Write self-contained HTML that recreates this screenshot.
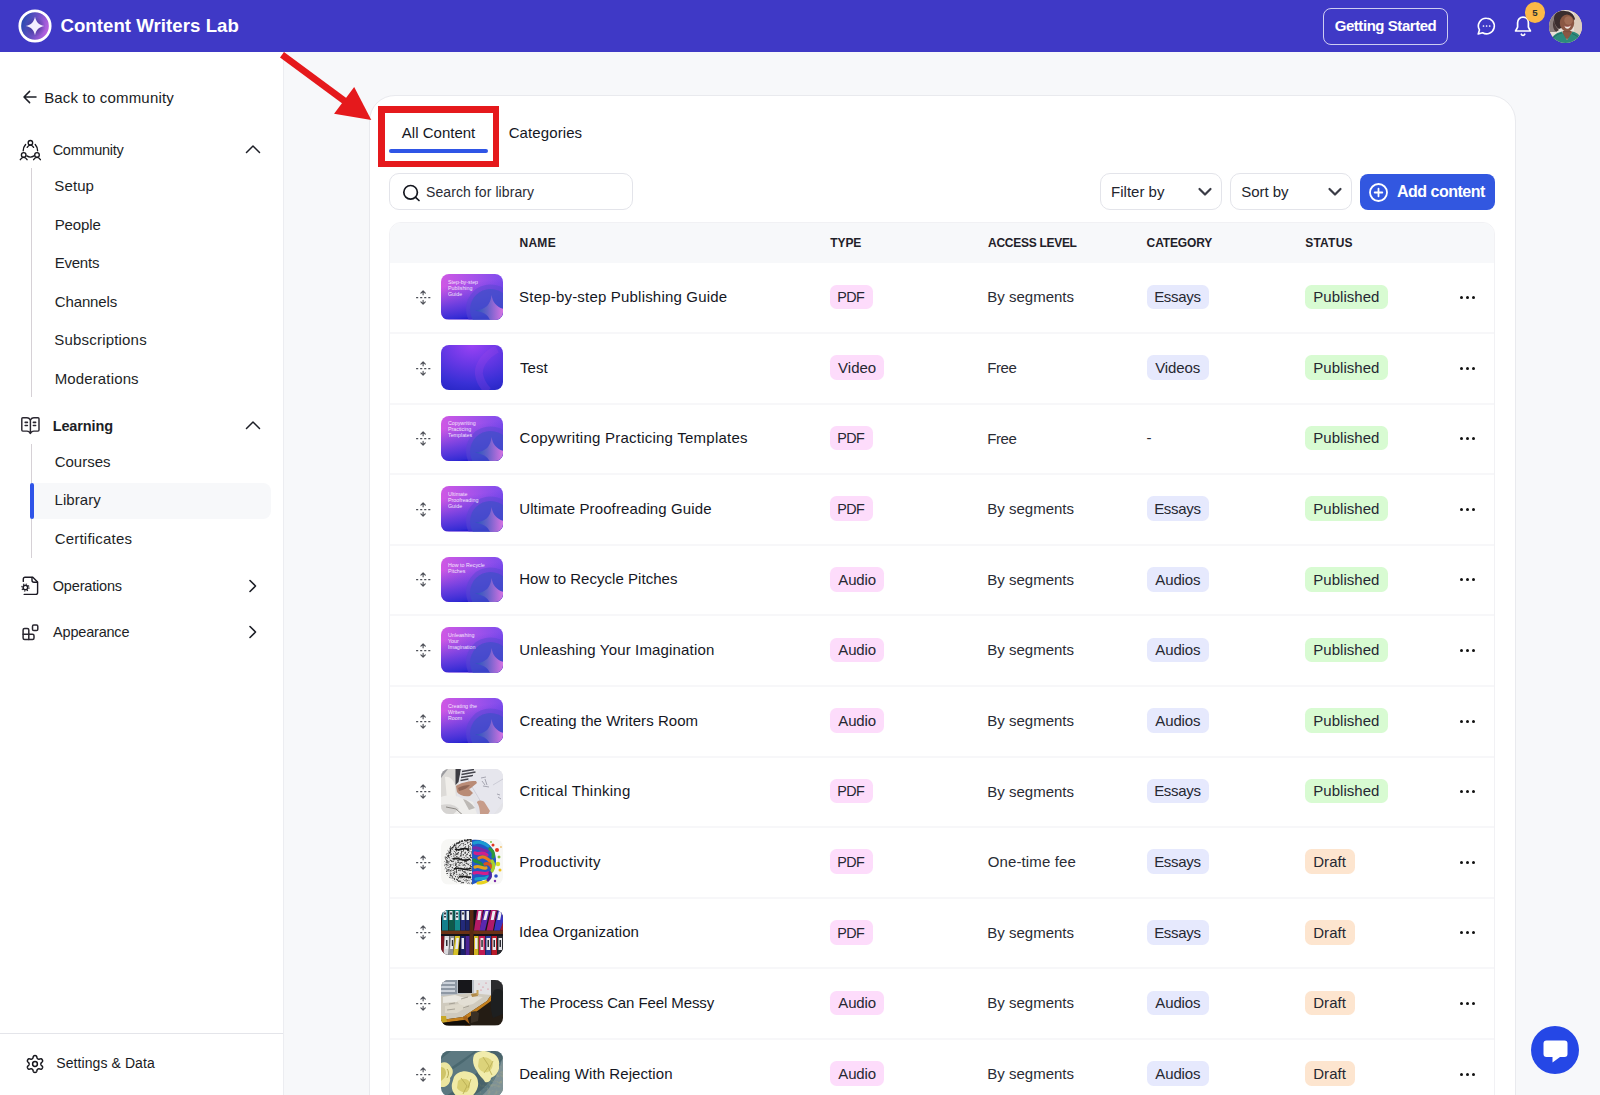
<!DOCTYPE html>
<html lang="en">
<head>
<meta charset="utf-8">
<title>Content Writers Lab - Library</title>
<style>
*{box-sizing:border-box;margin:0;padding:0}
html,body{width:1600px;height:1095px;overflow:hidden;background:#f7f8fa;font-family:"Liberation Sans",sans-serif;color:#191b23}
body{position:relative}
.abs{position:absolute}
.t{position:absolute;white-space:nowrap;line-height:20px;height:20px;margin-top:-10px}
/* header */
#hdr{position:absolute;left:0;top:0;width:1600px;height:52px;background:#3f39c6}
.brand{left:61px;top:26.200px;color:#fff;font-weight:700;font-size:18.600px}
#gs{position:absolute;left:1323px;top:8px;width:124.500px;height:36.500px;border:1px solid rgba(255,255,255,.75);border-radius:8px;color:#fff;font-weight:700;font-size:15px;line-height:34px;text-align:center}
#badge{position:absolute;left:1524.500px;top:2.400px;width:20.600px;height:20.600px;border-radius:50%;background:#fcb947;color:#2b3230;font-size:9.600px;font-weight:700;text-align:center;line-height:22.600px}
#avatar{position:absolute;left:1549px;top:9.700px;width:33px;height:33px;border-radius:50%;overflow:hidden;background:#8a6a5a}
/* sidebar */
#side{position:absolute;left:0;top:52px;width:284px;height:1043px;background:#fff;border-right:1px solid #ecedf1}
.nav{font-size:14.5px;color:#1d1f27}
.sub{font-size:15px;color:#1d1f27;left:55px}
.vline{position:absolute;left:31px;width:1px;background:#d6d1d6}
#active{position:absolute;left:31px;top:483px;width:240px;height:36px;background:#f7f8fa;border-radius:0 8px 8px 0}
#activebar{position:absolute;left:30px;top:483px;width:4px;height:36px;background:#2f54e8;border-radius:2px}
#sdiv{position:absolute;left:0;top:1033px;width:283px;height:1px;background:#e4e5ea}
/* card */
#card{position:absolute;left:369px;top:95px;width:1147px;height:1040px;background:#fff;border:1px solid #e9eaee;border-radius:26px}
.box{background:#fff;border:1px solid #e3e4ea;border-radius:10px}
.chev{fill:none;stroke:#3a3c46;stroke-width:2.200;stroke-linecap:round;stroke-linejoin:round}
.hd{font-size:12px;font-weight:700;color:#1f2129;letter-spacing:.2px}
.rdiv{position:absolute;left:390px;width:1104px;height:2px;background:#f7f7f9}
.nm{font-size:15px;color:#15171f;letter-spacing:.2px}
.ac{font-size:15px;color:#2a2c35;letter-spacing:.2px}
.bx{position:absolute;height:24.700px;border-radius:6.500px}
.bt{font-size:15px;color:#262832}
.pk{background:#fddcfb}
.bl{background:#e6e9fd}
.gr{background:#d8fbd2}
.or{background:#fde5cf}
.dots{position:absolute;width:16px;height:3px}
.dots i{position:absolute;top:0;width:3px;height:3px;border-radius:50%;background:#111}
.dots i:nth-child(1){left:0}.dots i:nth-child(2){left:6px}.dots i:nth-child(3){left:12px}
.th{position:absolute;left:441px;width:62.300px;height:45.400px;border-radius:8px;overflow:hidden}
.th svg{display:block}
.th b{position:absolute;left:7px;top:5.800px;font-size:5.300px;line-height:5.900px;font-weight:400;color:rgba(255,255,255,.88)}
.th b span{display:block}
</style>
</head>
<body>
<div id="hdr">
  <svg class="abs" style="left:16.500px;top:8.250px" width="36" height="36" viewBox="0 0 36 36">
    <defs><linearGradient id="lg" x1="0" y1="0.350" x2="1" y2="0.650"><stop offset="0" stop-color="#1f49ae"/><stop offset=".5" stop-color="#6b50c4"/><stop offset="1" stop-color="#c765e6"/></linearGradient>
    <radialGradient id="lgs" cx=".5" cy=".5" r=".5"><stop offset="0" stop-color="#1c1a6a" stop-opacity=".55"/><stop offset="1" stop-color="#1c1a6a" stop-opacity="0"/></radialGradient></defs>
    <circle cx="18" cy="18" r="15.200" fill="url(#lg)" stroke="#fff" stroke-width="2.700"/>
    <circle cx="18.500" cy="19" r="10" fill="url(#lgs)"/>
    <path d="M18 8.800C19.300 14.400 21.600 16.700 27.200 18 21.600 19.300 19.300 21.600 18 27.200 16.700 21.600 14.400 19.300 8.800 18 14.400 16.700 16.700 14.400 18 8.800Z" fill="#f3efff"/>
  </svg>
  <div class="t brand" style="letter-spacing:0.063px;margin-left:-0.61px">Content Writers Lab</div>
  <div id="gs"></div>
  <div class="t" style="left:1334px;top:26.200px;color:#fff;font-weight:700;font-size:15px;letter-spacing:-0.45px;margin-left:0.72px">Getting Started</div>
  <svg class="abs" style="left:1475px;top:15px" width="22" height="22" viewBox="0 0 22 22" fill="none" stroke="#fff" stroke-width="1.6" stroke-linecap="round" stroke-linejoin="round">
    <path d="M11.5 3.2a7.8 7.8 0 1 1-3.9 14.55L3.2 19l1.25-4.1A7.8 7.8 0 0 1 11.5 3.2Z"/>
    <circle cx="8.500" cy="11" r=".850" fill="#fff" stroke="none"/><circle cx="11.600" cy="11" r=".850" fill="#fff" stroke="none"/><circle cx="14.700" cy="11" r=".850" fill="#fff" stroke="none"/>
  </svg>
  <svg class="abs" style="left:1512px;top:14px" width="22" height="24" viewBox="0 0 22 24" fill="none" stroke="#fff" stroke-width="1.7" stroke-linecap="round" stroke-linejoin="round">
    <path d="M11 3.2c-3.3 0-5.4 2.5-5.4 5.6v4.3L3.6 17h14.8l-2-3.9V8.8c0-3.1-2.1-5.6-5.4-5.6Z"/>
    <path d="M9.3 20.2a1.8 1.8 0 0 0 3.4 0"/>
  </svg>
  <div id="badge">5</div>
  <div id="avatar">
    <svg width="33" height="33" viewBox="0 0 33 33">
      <rect width="33" height="33" fill="#e9e0d8"/>
      <rect x="25" y="0" width="8" height="33" fill="#dccdbd"/>
      <path d="M0 2h12v14l-6 6H0Z" fill="#8d807e"/>
      <path d="M5 9C5 3 10 0 16 1c5 0 9 3 10 8l-3 4-13 6C7 17 5 13 5 9Z" fill="#3a2d2e"/>
      <path d="M5 10c1 5 2 8 5 10l-3 2c-3-3-4-8-2-12Z" fill="#4a3b3a"/>
      <ellipse cx="18" cy="13" rx="7.200" ry="8.600" fill="#8a5743"/>
      <ellipse cx="19.500" cy="10.500" rx="4.200" ry="4.200" fill="#a16c55"/>
      <path d="M14 21h8.500v7H14Z" fill="#7e4f3e"/>
      <path d="M15.500 15.800c2 .9 4.500.8 6.300-.6-.4 2.300-1.700 3.500-3.300 3.500s-2.700-1.100-3-2.900Z" fill="#f3e9e2"/>
      <path d="M15.500 15.800c2 .9 4.500.8 6.300-.6" stroke="#a24a4a" stroke-width=".7" fill="none"/>
      <path d="M2 33c0-6 4-10 11-11.500l5 8.500 5.500-8.500c5 1 8 4 9.500 9V33Z" fill="#2d8b7c"/>
      <path d="M13 21.500l5 8.500 5.500-8.500c-3.500 1-7 1-10.500 0Z" fill="#8a5743"/>
      <path d="M4 28c3-3 6-4.500 9-5M23 23.500c3 1 6 3 8 6" stroke="#226b60" stroke-width="1" fill="none"/>
    </svg>
  </div>
</div>

<div id="side">
</div>
<!-- sidebar contents positioned on body for exact coordinates -->
<svg class="abs" style="left:22px;top:89px" width="16" height="16" viewBox="0 0 16 16" fill="none" stroke="#1d1f27" stroke-width="1.5" stroke-linecap="round" stroke-linejoin="round"><path d="M14 8H2.2M7.6 2.4 2 8l5.6 5.6"/></svg>
<div class="t" style="left:45px;top:97.6px;font-size:15px;letter-spacing:.15px;letter-spacing:0.181px;margin-left:-0.85px">Back to community</div>

<svg class="abs" style="left:18px;top:138px" width="24" height="24" viewBox="0 0 24 24" fill="none" stroke="#16161c" stroke-width="1.350" stroke-linecap="round" stroke-linejoin="round">
  <circle cx="12.400" cy="4.700" r="2.250"/><path d="M9.200 9.300c.9-1.600 2-2.200 3.200-2.200s2.300.6 3.200 2.200"/>
  <circle cx="5.700" cy="16.900" r="2.300"/><path d="M2.300 21.700c1-1.700 2.100-2.300 3.400-2.300s2.400.6 3.400 2.300"/>
  <circle cx="19" cy="16.900" r="2.300"/><path d="M15.600 21.700c1-1.700 2.100-2.300 3.400-2.300s2.400.6 3.400 2.300"/>
  <path d="M7.600 6.500Q5.200 9.200 5.200 12.700M17.200 6.500q2.400 2.700 2.400 6.200M8.900 17.900q3.500 2.400 7 0"/>
</svg>
<div class="t nav" style="left:53px;top:150px;letter-spacing:-0.269px;margin-left:-0.35px">Community</div>
<svg class="abs" style="left:245px;top:143px" width="16" height="12" viewBox="0 0 16 12" fill="none" stroke="#1d1f27" stroke-width="1.5" stroke-linecap="round" stroke-linejoin="round"><path d="M1.500 9.500 8 3l6.500 6.500"/></svg>
<div class="vline" style="top:168px;height:229px"></div>
<div class="t sub" style="top:186.4px;letter-spacing:0.1px;margin-left:-0.67px">Setup</div>
<div class="t sub" style="top:224.8px;letter-spacing:-0.115px;margin-left:-0.37px">People</div>
<div class="t sub" style="top:263.2px;letter-spacing:-0.208px;margin-left:-0.37px">Events</div>
<div class="t sub" style="top:301.5px;letter-spacing:-0.094px;margin-left:-0.37px">Channels</div>
<div class="t sub" style="top:339.9px;letter-spacing:0.189px;margin-left:-0.67px">Subscriptions</div>
<div class="t sub" style="top:378.5px;letter-spacing:0.143px;margin-left:-0.37px">Moderations</div>

<svg class="abs" style="left:18px;top:413px" width="24" height="24" viewBox="0 0 24 24" fill="none" stroke="#2a2730" stroke-width="1.450" stroke-linecap="round" stroke-linejoin="round">
  <path d="M12.400 6.900C11.400 5.400 10.200 4.800 9 4.800H4.800a1 1 0 0 0-1 1V17.100a1 1 0 0 0 1 1H9c1.200 0 2.400.5 3.400 2.100"/>
  <path d="M12.400 6.900c1-1.500 2.200-2.100 3.400-2.100H20a1 1 0 0 1 1 1V17.100a1 1 0 0 1-1 1h-4.200c-1.200 0-2.400.5-3.400 2.100"/>
  <path d="M12.400 6.900V20.600"/>
  <path d="M7.200 9.400h2.200M7.200 12.500h2.200M15.400 9.400h2.200M15.400 12.500h2.200" stroke-width="1.600"/>
</svg>
<div class="t nav" style="left:53px;top:425.7px;font-weight:700;letter-spacing:-0.119px;margin-left:-0.32px">Learning</div>
<svg class="abs" style="left:245px;top:419px" width="16" height="12" viewBox="0 0 16 12" fill="none" stroke="#1d1f27" stroke-width="1.500" stroke-linecap="round" stroke-linejoin="round"><path d="M1.500 9.500 8 3l6.500 6.500"/></svg>
<div class="vline" style="top:444px;height:114px"></div>
<div id="active"></div><div id="activebar"></div>
<div class="t sub" style="top:462.1px;letter-spacing:0.005px;margin-left:-0.37px">Courses</div>
<div class="t sub" style="top:500.4px;letter-spacing:0.074px;margin-left:-0.47px">Library</div>
<div class="t sub" style="top:538.8px;letter-spacing:0.219px;margin-left:-0.37px">Certificates</div>

<svg class="abs" style="left:18px;top:574px" width="24" height="24" viewBox="0 0 24 24" fill="none" stroke="#1c1a24" stroke-width="1.400" stroke-linecap="round" stroke-linejoin="round">
  <path d="M5.300 7.400V4.900a1.700 1.700 0 0 1 1.700-1.700h7.800L19.600 8v10.500a1.900 1.900 0 0 1-1.900 1.900H6.200"/>
  <path d="M14 3.400v2.900a2 2 0 0 0 2 2h3.400"/>
  <circle cx="7.400" cy="13.500" r="2.300" stroke-width="1.500"/>
  <circle cx="7.400" cy="13.500" r="3.600" stroke-width="1.100" stroke-dasharray="1.250 1.577" stroke-linecap="butt"/>
</svg>
<div class="t nav" style="left:53px;top:585.7px;letter-spacing:-0.177px;margin-left:-0.25px">Operations</div>
<svg class="abs" style="left:247px;top:578px" width="12" height="16" viewBox="0 0 12 16" fill="none" stroke="#1d1f27" stroke-width="1.600" stroke-linecap="round" stroke-linejoin="round"><path d="M3 2.500 8.500 8 3 13.500"/></svg>

<svg class="abs" style="left:18px;top:620px" width="24" height="24" viewBox="0 0 24 24" fill="none" stroke="#2a2730" stroke-width="1.500" stroke-linecap="round" stroke-linejoin="round">
  <path d="M5.100 14.300V9.900a1.500 1.500 0 0 1 1.500-1.500h2.700a1.500 1.500 0 0 1 1.500 1.500v4.400h3.700a1.500 1.500 0 0 1 1.500 1.500v2.300a1.500 1.500 0 0 1-1.500 1.500H6.600a1.500 1.500 0 0 1-1.500-1.500Z"/>
  <path d="M5.100 14.300h5.700v5.300"/>
  <rect x="14.500" y="5.100" width="5.300" height="5.500" rx="1.300"/>
</svg>
<div class="t nav" style="left:53px;top:632.3px;letter-spacing:-0.203px;margin-left:0.12px">Appearance</div>
<svg class="abs" style="left:247px;top:624px" width="12" height="16" viewBox="0 0 12 16" fill="none" stroke="#1d1f27" stroke-width="1.600" stroke-linecap="round" stroke-linejoin="round"><path d="M3 2.500 8.500 8 3 13.500"/></svg>

<div id="sdiv"></div>
<svg class="abs" style="left:22.800px;top:1051.900px" width="24" height="24" viewBox="0 0 24 24" fill="none" stroke="#16161c" stroke-width="1.500" stroke-linejoin="round">
  <circle cx="12" cy="12" r="2.400"/>
  <path d="M17.90 12.00 17.90 11.79 17.92 11.59 17.95 11.37 18.02 11.15 18.15 10.91 18.39 10.64 18.72 10.32 19.09 9.97 19.39 9.60 19.57 9.25 19.62 8.92 19.60 8.62 19.52 8.33 19.41 8.06 19.27 7.80 19.12 7.55 18.94 7.32 18.73 7.11 18.48 6.94 18.17 6.83 17.77 6.80 17.30 6.88 16.81 7.02 16.37 7.15 16.02 7.21 15.74 7.21 15.52 7.16 15.32 7.08 15.13 6.99 14.95 6.89 14.77 6.78 14.60 6.67 14.43 6.53 14.28 6.36 14.14 6.13 14.02 5.79 13.91 5.34 13.78 4.84 13.62 4.40 13.40 4.07 13.14 3.86 12.87 3.73 12.58 3.65 12.29 3.61 12.00 3.60 11.71 3.61 11.42 3.65 11.13 3.73 10.86 3.86 10.60 4.07 10.38 4.40 10.22 4.84 10.09 5.34 9.98 5.79 9.86 6.13 9.72 6.36 9.57 6.53 9.40 6.67 9.23 6.78 9.05 6.89 8.87 6.99 8.68 7.08 8.48 7.16 8.26 7.21 7.98 7.21 7.63 7.15 7.19 7.02 6.70 6.88 6.23 6.80 5.83 6.83 5.52 6.94 5.27 7.11 5.06 7.32 4.88 7.55 4.73 7.80 4.59 8.06 4.48 8.33 4.40 8.62 4.38 8.92 4.43 9.25 4.61 9.60 4.91 9.97 5.28 10.32 5.61 10.64 5.85 10.91 5.98 11.15 6.05 11.37 6.08 11.59 6.10 11.79 6.10 12.00 6.10 12.21 6.08 12.41 6.05 12.63 5.98 12.85 5.85 13.09 5.61 13.36 5.28 13.68 4.91 14.03 4.61 14.40 4.43 14.75 4.38 15.08 4.40 15.38 4.48 15.67 4.59 15.94 4.73 16.20 4.88 16.45 5.06 16.68 5.27 16.89 5.52 17.06 5.83 17.17 6.23 17.20 6.70 17.12 7.19 16.98 7.63 16.85 7.98 16.79 8.26 16.79 8.48 16.84 8.68 16.92 8.87 17.01 9.05 17.11 9.23 17.22 9.40 17.33 9.57 17.47 9.72 17.64 9.86 17.87 9.98 18.21 10.09 18.66 10.22 19.16 10.38 19.60 10.60 19.93 10.86 20.14 11.13 20.27 11.42 20.35 11.71 20.39 12.00 20.40 12.29 20.39 12.58 20.35 12.87 20.27 13.14 20.14 13.40 19.93 13.62 19.60 13.78 19.16 13.91 18.66 14.02 18.21 14.14 17.87 14.28 17.64 14.43 17.47 14.60 17.33 14.77 17.22 14.95 17.11 15.13 17.01 15.32 16.92 15.52 16.84 15.74 16.79 16.02 16.79 16.37 16.85 16.81 16.98 17.30 17.12 17.77 17.20 18.17 17.17 18.48 17.06 18.73 16.89 18.94 16.68 19.12 16.45 19.27 16.20 19.41 15.94 19.52 15.67 19.60 15.38 19.62 15.08 19.57 14.75 19.39 14.40 19.09 14.03 18.72 13.68 18.39 13.36 18.15 13.09 18.02 12.85 17.95 12.63 17.92 12.41 17.90 12.21Z"/>
</svg>
<div class="t" style="left:57px;top:1063.300px;font-size:14px;letter-spacing:0.082px;margin-left:-0.73px">Settings &amp; Data</div>

<div id="card"></div>
<svg width="0" height="0" style="position:absolute">
  <defs>
    <g id="dragi" fill="none" stroke="#4e5058" stroke-width="1.150" stroke-linecap="round" stroke-linejoin="round">
      <path d="M8.100 3V6.800M5.900 5.100 8.100 2.900l2.200 2.200"/>
      <path d="M8.100 16V12.200M5.900 13.900 8.100 16.100l2.200-2.200"/>
      <path d="M1.100 9.600h14.300" stroke-dasharray="2.100 1.950" stroke-linecap="butt" stroke-width="1.100"/>
    </g>
    <linearGradient id="ga" x1="0" y1="0" x2="1" y2="0"><stop offset="0" stop-color="#cf58e4"/><stop offset=".5" stop-color="#a853ea"/><stop offset="1" stop-color="#7e4cec"/></linearGradient>
    <linearGradient id="gb" x1=".3" y1="0" x2=".5" y2="1"><stop offset=".22" stop-color="#5a38de" stop-opacity="0"/><stop offset=".66" stop-color="#5337dc" stop-opacity=".8"/><stop offset=".92" stop-color="#352cd4"/><stop offset="1" stop-color="#1a10ca"/></linearGradient>
    <linearGradient id="gc" x1="34" y1="0" x2="62" y2="0" gradientUnits="userSpaceOnUse"><stop offset="0" stop-color="#2556b8"/><stop offset=".45" stop-color="#6660ca"/><stop offset="1" stop-color="#d674e2"/></linearGradient>
    <g id="g1">
      <rect width="62" height="45.400" fill="url(#ga)"/>
      <rect width="62" height="45.400" fill="url(#gb)"/>
      <circle cx="49.500" cy="35" r="24.500" fill="#5a48d2" fill-opacity=".5"/>
      <circle cx="49.500" cy="35.500" r="20.500" fill="#3c50c6" fill-opacity=".62"/>
      <path d="M50.600 21C49.300 30.800 45.500 35 34 36.700 45.500 38.400 49.300 42.600 50.600 52.500H70V36.700C58 35 52 30.800 50.600 21Z" fill="url(#gc)"/>
    </g>
    <radialGradient id="gd" cx=".5" cy="0" r="1.050" gradientTransform="translate(0 0) scale(1 1)"><stop offset="0" stop-color="#9a42f4"/><stop offset=".4" stop-color="#6a38e6"/><stop offset=".8" stop-color="#3a30d6"/><stop offset="1" stop-color="#2a28c8"/></radialGradient>
    <g id="g2">
      <rect width="62" height="45.400" fill="url(#gd)"/>
      <path d="M56 4C46 9 37 19 38 29 39 37 43 42 47 46" fill="none" stroke="#a848e6" stroke-opacity=".22" stroke-width="8"/>
    </g>
    <filter id="nz" x="0" y="0" width="100%" height="100%"><feTurbulence type="fractalNoise" baseFrequency=".55" numOctaves="2" seed="7"/><feColorMatrix type="matrix" values="0 0 0 0 .08  0 0 0 0 .08  0 0 0 0 .08  3.400 3.400 0 0 -3.180"/></filter>
    <filter id="nz2" x="0" y="0" width="100%" height="100%"><feTurbulence type="fractalNoise" baseFrequency=".3" numOctaves="2" seed="3"/><feColorMatrix type="matrix" values="0 0 0 0 .55  0 0 0 0 .5  0 0 0 0 .2  2.500 2.500 0 0 -2.450"/></filter>
    <g id="p1">
      <rect width="62" height="45.400" fill="#e3e3e8"/>
      <path d="M0 0h16l2 10-3 18-15 4Z" fill="#dcdad7"/>
      <path d="M0 0h7L0 9Z" fill="#9b9b9f"/>
      <path d="M4 8c4-1 8 2 10 8l1 12-9 3Z" fill="#f0eeea"/>
      <path d="M14.500 0h5.500l-2.500 13-3 3Z" fill="#3c3c42"/>
      <path d="M20 0h20l-5 12-17 4Z" fill="#e9e9ee"/>
      <path d="M21 2.500l12-2M20.500 5.500l14-2.500M20 8.500l12-2M19.500 11.500l8-1.500" stroke="#45454d" stroke-width="1.500" fill="none"/>
      <path d="M27 11l14-11h21v33l-9 12H47l-20-30Z" fill="#e6e6ed"/>
      <path d="M27 11 47 45" stroke="#c9c9d2" stroke-width=".8"/>
      <path d="M52 16l10-6" stroke="#c5c5d0" stroke-width=".8"/>
      <path d="M40 9l5-1M41 12l3 4M44 10l2 6M42 17l6 1M56 25l3 1M57 28l3 2" stroke="#8a8a96" stroke-width=".7" fill="none"/>
      <path d="M15 17c4-3 12-5 20-5l1 2c-3 2-5 5-8 6l4 4-3 3c-6 1-11-1-13-4Z" fill="#b98b76"/>
      <path d="M17 19c3-2 8-3 12-3-2 3-6 5-11 6Z" fill="#8f6656"/>
      <path d="M0 28c6-2 14-2 20 1l12 4 4 12H0Z" fill="#eeedeb"/>
      <path d="M0 36c8-2 14 0 18 4l-6 5.400H0Z" fill="#d6d4d2"/>
      <path d="M22 30c4 1 8 4 12 9l-6 2Z" fill="#bdb9b5"/>
      <path d="M36 33c2-2 6-2 8 1l5 8-2 3.400H39c0-5-1-9-3-12Z" fill="#c79c8a"/>
      <path d="M5 38l10 2 6 5.400" stroke="#8d8a86" stroke-width="1" fill="none"/>
    </g>
    <g id="p2">
      <rect width="62" height="45.400" fill="#f7f7f5"/>
      <path d="M31 1C17 0 5 9 4 22c-1 11 6 19 14 21l13 2.400Z" fill="#e4e4e4"/>
      <clipPath id="brc"><path d="M31.500 0C16 -1 4 8 3 22c-1 12 6 20 15 22l13.500 1.400Z"/></clipPath><g clip-path="url(#brc)"><rect x="2" y="0" width="29.500" height="45.400" filter="url(#nz)"/></g>
      <path d="M31 1C19 0 9 7 7 18" fill="none" stroke="#222" stroke-width="1.200" stroke-dasharray="2 1"/>
      <path d="M14 10c5 3 8-3 14 1M12 20c6-3 9 4 17 0M13 30c6-3 10 3 17-1M18 38c4-2 8 1 12 0" stroke="#1b1b1b" stroke-width="1.700" fill="none"/>
      <path d="M31 1c12-2 23 6 24 19 1 12-8 21-24 25.400Z" fill="#2357c6"/>
      <g fill="none" stroke-width="3.200" stroke-linecap="round">
        <path d="M33 4c5-2 10 0 14 3" stroke="#1c9bd1"/>
        <path d="M33 9c6-1 8 3 13 3" stroke="#7a2aa8"/>
        <path d="M34 14c4 2 7-2 12 2" stroke="#d11f8a"/>
        <path d="M38 19c4-3 8 0 11 3" stroke="#e87b1c"/>
        <path d="M33 21c3 3 6 1 8 5" stroke="#1f8f3f"/>
        <path d="M44 25c3-1 6 1 7 4" stroke="#d9531e"/>
        <path d="M34 28c4-2 7 2 11 1" stroke="#e3a21c"/>
        <path d="M33 34c5-2 9 2 14 0" stroke="#d11f8a"/>
        <path d="M35 40c4-1 8 1 12-2" stroke="#1ca0c8"/>
        <path d="M37 44c3 0 6 0 9-2" stroke="#e8d21e"/>
        <path d="M49 10c3 2 4 5 3 8" stroke="#2f9a3a"/>
        <path d="M51 22c2 3 2 7 0 10" stroke="#a8d02c"/>
        <path d="M49 34c1 2 0 5-2 7" stroke="#4a2aa8"/>
      </g>
      <g><circle cx="52" cy="6" r="1.500" fill="#e3331f"/><circle cx="56" cy="11" r="2" fill="#e3331f"/><circle cx="58" cy="18" r="1.500" fill="#8bc43a"/><circle cx="57" cy="25" r="2.200" fill="#d6e02a"/><circle cx="59" cy="31" r="1.500" fill="#f0c21c"/><circle cx="55" cy="37" r="1.800" fill="#2f4ac8"/><circle cx="50" cy="3" r="1" fill="#7cc242"/><circle cx="60" cy="8" r=".8" fill="#f0a21c"/><circle cx="54" cy="42" r="1.200" fill="#7a2aa8"/></g>
    </g>
    <g id="p3">
      <rect width="62" height="45.400" fill="#15131a"/>
      <rect x="0" y="20.500" width="62" height="3.500" fill="#6b3216"/>
      <rect x="28.500" y="0" width="4" height="45.400" fill="#5a2a12"/>
      <rect x="1" y="0" width="6" height="20.500" fill="#137f8c"/><rect x="7.500" y="0" width="5.500" height="20.500" fill="#0e5a4a"/><rect x="13.500" y="0" width="5.500" height="20.500" fill="#138a8a"/><rect x="19.500" y="0" width="5" height="20.500" fill="#232a7a"/><rect x="25" y="0" width="3.500" height="20.500" fill="#1d2468"/>
      <path d="M36 0h6l-3 20.500h-6Z" fill="#b51a66"/><path d="M43 0h6l-5 20.500h-5.500Z" fill="#5a28b0"/><path d="M50 0h6l-4 20.500h-6.500Z" fill="#b01a6a"/><path d="M57 0h5v14l-3 6.500h-6Z" fill="#3a34c0"/><path d="M62 12v8.500h-3Z" fill="#a01a2a"/>
      <g fill="#ececf0"><rect x="2.500" y="1" width="3" height="9"/><rect x="8.500" y="1" width="3" height="9"/><rect x="14.500" y="1" width="3" height="9"/><rect x="20.500" y="1" width="3" height="9"/><rect x="25.500" y="1" width="2.500" height="9"/><path d="M37.500 1h3l-1.300 9h-3ZM44.500 1h3l-2.200 9h-3ZM51.500 1h3l-1.800 9h-3ZM58 1h3l-1.800 9h-3Z"/></g>
      <g fill="#3a3a44"><rect x="3" y="2.500" width="2" height="2"/><rect x="9" y="2.500" width="2" height="2"/><rect x="15" y="2.500" width="2" height="2"/><rect x="21" y="2.500" width="2" height="2"/><rect x="3" y="6" width="2" height="1.500"/><rect x="15" y="6" width="2" height="1.500"/></g>
      <rect x="0" y="26" width="3.500" height="19.400" fill="#7a1420"/>
      <path d="M3.500 26h5l-1 19.400h-5Z" fill="#d8d8dc"/><path d="M9 26h4.500l-1.500 19.400h-4.500Z" fill="#8e8e94"/><path d="M14 26h5l-2 19.400h-5Z" fill="#d6c128"/><rect x="19.500" y="26" width="4.500" height="19.400" fill="#1c226a"/><rect x="24.500" y="26" width="4" height="19.400" fill="#4a2496"/>
      <rect x="33" y="26" width="4.500" height="19.400" fill="#cfb422"/><rect x="38" y="26" width="6" height="19.400" fill="#c01a50"/><rect x="44.500" y="26" width="5.500" height="19.400" fill="#2a3a9a"/><rect x="50.500" y="26" width="5.500" height="19.400" fill="#b81a2a"/><rect x="56.500" y="26" width="5.500" height="19.400" fill="#2a2a30"/>
      <g fill="#e9e9ee"><path d="M4.500 28h3l-.6 11h-3ZM10 28h2.800l-.9 11h-2.800ZM15.300 28h2.600l-1.100 11h-2.600Z"/><rect x="20.500" y="28" width="2.500" height="11"/><rect x="34" y="28" width="2.500" height="11"/><rect x="39.500" y="28" width="3" height="12"/><rect x="45.500" y="28" width="3.500" height="12"/><rect x="51.500" y="28" width="3.500" height="12"/><rect x="57.500" y="28" width="3.500" height="12"/></g>
      <g fill="#2c2c34"><rect x="5" y="30" width="1.500" height="6"/><rect x="10.800" y="30" width="1.300" height="6"/><rect x="40.300" y="30" width="1.500" height="7"/><rect x="46.500" y="30" width="1.500" height="7"/><rect x="52.500" y="30" width="1.500" height="7"/><rect x="58.500" y="30" width="1.500" height="7"/></g>
    </g>
    <g id="p4">
      <rect width="62" height="45.400" fill="#241c14"/>
      <rect x="0" y="0" width="62" height="16" fill="#b9bfc6"/>
      <rect x="0" y="0" width="16" height="14" fill="#8e98a4"/>
      <path d="M0 3h14M0 7h14M0 11h14" stroke="#dfe4ea" stroke-width="1.300"/>
      <rect x="17" y="0" width="14" height="13" fill="#17171b"/>
      <rect x="33" y="0" width="17" height="15" fill="#e2e2e4"/>
      <g fill="#d86a7a"><circle cx="38" cy="4" r=".6"/><circle cx="42" cy="7" r=".6"/><circle cx="45" cy="3" r=".6"/><circle cx="40" cy="10" r=".6"/><circle cx="47" cy="9" r=".6"/></g>
      <rect x="50" y="0" width="12" height="18" fill="#2b2b2d"/>
      <path d="M53 10c4-2 8-1 9 2v22l-10 4c-3-8-3-20 1-28Z" fill="#1d1f20"/>
      <path d="M0 16l30-3 20 2-4 6-24 16-22 3Z" fill="#cfcabd"/>
      <path d="M2 17l12-2 10 3-8 4-14 1Z" fill="#e9e7e0"/>
      <path d="M16 21l14-5 12 1-10 7-12 3Z" fill="#e3dfd4"/>
      <path d="M4 26l14-2 8 3-10 6-12 0Z" fill="#ddd8ca"/>
      <path d="M30 14l6-1 1 3-6 1Z" fill="#b08a4a"/><rect x="35.500" y="10" width="2" height="5" fill="#c7a35a"/>
      <path d="M8 24l6-1M20 19l7-2M22 28l6-2M6 30l8-1" stroke="#9a958a" stroke-width=".8"/>
      <path d="M50 15l-4 6-24 16-22 3v3l24-3 26-19Z" fill="#c4801e"/>
      <path d="M22 37l4-1 3 9.400h-5Z" fill="#a8641a"/>
      <path d="M0 36l5 0 1 6-6 1Z" fill="#c8a826"/>
      <path d="M30 32c3-1 6-1 8 1l-1 8-7 2Z" fill="#3a3026"/>
      <path d="M0 43l24-3 6 5.400H0Z" fill="#120d08"/>
    </g>
    <g id="p5">
      <rect width="62" height="45.400" fill="#5b7880"/>
      <path d="M0 0h36C24 10 12 20 0 24Z" fill="#4a6870"/>
      <path d="M10 0h24L8 18 0 20V8Z" fill="#6f8a92" fill-opacity=".5"/>
      <path d="M62 4v41.400H40c10-8 18-22 22-41.400Z" fill="#7f9296"/>
      <rect x="40" y="4" width="22" height="41.400" filter="url(#nz2)" opacity=".25"/>
      <path d="M30 45.400c10-4 20-14 26-30l6-8v-7.400H50C46 14 30 30 4 45.400Z" fill="#38525a" fill-opacity=".55"/>
      <path d="M0 12c4-2 8 0 10 4 3 3 2 8-1 11 1 4-2 8-6 9L0 36Z" fill="#ece6a0"/>
      <path d="M0 16c3 0 5 3 5 6s-2 6-5 8Z" fill="#cfc468"/><path d="M6 18c2 2 2 6 0 9" stroke="#b5aa50" stroke-width="1" fill="none"/>
      <path d="M13 26c3-5 10-7 15-5 5 1 9 5 9 10 1 5-2 10-6 14.400H16c-4-3-6-8-5-13Z" fill="#f0eaa6"/>
      <path d="M17 30c3-3 8-3 11 0 2 3 1 8-2 11-4 1-8-1-10-4Z" fill="#d8ce70"/><path d="M20 27l6 8-4 8M30 28l-3 9" stroke="#b9ae54" stroke-width=".9" fill="none"/>
      <path d="M33 4c4-5 12-5 17-2 6 1 9 7 8 12 1 6-3 11-8 13 0 3-3 5-6 4-2-4-6-6-8-11-4-5-5-11-3-16Z" fill="#f1ecac"/>
      <path d="M38 8c4-3 10-2 13 2 2 4 0 9-4 11-5 1-9-2-10-6Z" fill="#dcd37a"/><path d="M42 6l6 9-5 7M52 10l-4 8 3 6" stroke="#bcb158" stroke-width=".9" fill="none"/>
    </g>
  </defs>
</svg>

<!-- tabs -->
<div class="t" style="left:401.500px;top:132.500px;font-size:15px;letter-spacing:.1px;color:#15171f;letter-spacing:0.005px;margin-left:0.37px">All Content</div>
<div class="t" style="left:509px;top:132.500px;font-size:15px;letter-spacing:.1px;color:#15171f;letter-spacing:0.098px;margin-left:-0.32px">Categories</div>
<div class="abs" style="left:389px;top:148.500px;width:99px;height:4.500px;border-radius:3px;background:#2f55e6"></div>
<div class="abs" style="left:378px;top:106px;width:121px;height:61.400px;border:solid #e5191c;border-width:7px 6.500px 6.500px 7px"></div>
<!-- arrow -->
<svg class="abs" style="left:270px;top:50px" width="120" height="90" viewBox="270 50 120 90">
  <path d="M282 54.800 L347 102.700" stroke="#e5191c" stroke-width="6.700" stroke-linecap="butt" fill="none"/>
  <path d="M371.300 119.900 L334.050 113.700 L354.200 86.900 Z" fill="#e5191c"/>
</svg>

<!-- search -->
<div class="abs box" style="left:389px;top:173.200px;width:244px;height:36.800px"></div>
<svg class="abs" style="left:401px;top:183px" width="20" height="20" viewBox="0 0 20 20" fill="none" stroke="#15171f" stroke-width="1.700" stroke-linecap="round"><circle cx="9.600" cy="9.300" r="6.800"/><path d="M14.600 14.300 18 17.500"/></svg>
<div class="t" style="left:426.500px;top:191.500px;font-size:14px;color:#2a2c35;letter-spacing:0.081px;margin-left:-0.48px">Search for library</div>

<!-- filter / sort / add -->
<div class="abs box" style="left:1100.300px;top:173px;width:121.500px;height:36.600px"></div>
<div class="t" style="left:1111.500px;top:192px;font-size:15px;color:#23252e;letter-spacing:0.008px;margin-left:-0.46px">Filter by</div>
<svg class="abs chev" style="left:1197px;top:186px" width="16" height="12" viewBox="0 0 16 12"><path d="M2.500 3 8 8.500 13.500 3"/></svg>
<div class="abs box" style="left:1230.300px;top:173px;width:121.300px;height:36.600px"></div>
<div class="t" style="left:1241.500px;top:192px;font-size:15px;color:#23252e;letter-spacing:-0.078px;margin-left:-0.16px">Sort by</div>
<svg class="abs chev" style="left:1327px;top:186px" width="16" height="12" viewBox="0 0 16 12"><path d="M2.500 3 8 8.500 13.500 3"/></svg>
<div class="abs" style="left:1360px;top:174px;width:135px;height:36px;border-radius:8px;background:#3257e0"></div>
<svg class="abs" style="left:1368px;top:181.500px" width="21" height="21" viewBox="0 0 21 21" fill="none" stroke="#fff" stroke-width="1.800" stroke-linecap="round"><circle cx="10.500" cy="10.500" r="8.500"/><path d="M10.500 6.700v7.600M6.700 10.500h7.600"/></svg>
<div class="t" style="left:1397px;top:191.500px;font-size:16px;font-weight:700;color:#fff;letter-spacing:-0.504px;margin-left:0.03px">Add content</div>

<!-- table -->
<div class="abs" style="left:389px;top:222px;width:1106px;height:900px;border:1px solid #f1f1f4;border-radius:12px 12px 0 0;background:#fff;overflow:hidden">
  <div style="height:40px;background:#f7f8fa"></div>
</div>
<div class="t hd" style="left:520px;top:242.500px;letter-spacing:0.291px;margin-left:-0.57px">NAME</div>
<div class="t hd" style="left:830px;top:242.500px;letter-spacing:-0.122px;margin-left:0.3px">TYPE</div>
<div class="t hd" style="left:988px;top:242.500px;letter-spacing:-0.285px;margin-left:0.05px">ACCESS LEVEL</div>
<div class="t hd" style="left:1146.500px;top:242.500px;letter-spacing:-0.139px;margin-left:0.12px">CATEGORY</div>
<div class="t hd" style="left:1305.500px;top:242.500px;letter-spacing:0.243px;margin-left:-0.36px">STATUS</div>
<svg class="abs drag" style="left:415px;top:287.9px" width="16" height="18" viewBox="0 0 16 18"><use href="#dragi"/></svg>
<div class="th" style="top:274.4px"><svg width="62" height="45.400" viewBox="0 0 62 45.400"><use href="#g1"/></svg>
<b><span>Step-by-step</span><span>Publishing</span><span>Guide</span></b>
</div>
<div class="t nm" style="left:519px;top:296.9px;letter-spacing:0.196px;margin-left:0.08px">Step-by-step Publishing Guide</div>
<div class="bx pk" style="left:829.5px;top:284.5px;width:43.5px"></div>
<div class="t bt" style="left:837px;top:297.2px;font-size:14.300px;letter-spacing:-0.5px;margin-left:0.21px">PDF</div>
<div class="t ac" style="left:987px;top:297.4px;letter-spacing:0.007px;margin-left:0.28px">By segments</div>
<div class="bx bl" style="left:1146.5px;top:284.5px;width:62.75px"></div>
<div class="t bt" style="left:1154px;top:297.2px;letter-spacing:-0.319px;margin-left:0.13px">Essays</div>
<div class="bx gr" style="left:1305.25px;top:284.5px;width:82.25px"></div>
<div class="t bt" style="left:1313px;top:297.2px;letter-spacing:0.047px;margin-left:0.19px">Published</div>
<div class="dots" style="left:1460px;top:295.9px"><i></i><i></i><i></i></div>
<div class="rdiv" style="top:331.9px"></div>
<svg class="abs drag" style="left:415px;top:358.5px" width="16" height="18" viewBox="0 0 16 18"><use href="#dragi"/></svg>
<div class="th" style="top:345.0px"><svg width="62" height="45.400" viewBox="0 0 62 45.400"><use href="#g2"/></svg>
</div>
<div class="t nm" style="left:519px;top:367.5px;letter-spacing:0.096px;margin-left:0.98px">Test</div>
<div class="bx pk" style="left:829.5px;top:355.1px;width:54.5px"></div>
<div class="t bt" style="left:837px;top:367.8px;letter-spacing:-0.014px;margin-left:1.1px">Video</div>
<div class="t ac" style="left:987px;top:368.0px;letter-spacing:-0.412px;margin-left:0.28px">Free</div>
<div class="bx bl" style="left:1146.5px;top:355.1px;width:62px"></div>
<div class="t bt" style="left:1154px;top:367.8px;letter-spacing:-0.126px;margin-left:1.22px">Videos</div>
<div class="bx gr" style="left:1305.25px;top:355.1px;width:82.25px"></div>
<div class="t bt" style="left:1313px;top:367.8px;letter-spacing:0.047px;margin-left:0.19px">Published</div>
<div class="dots" style="left:1460px;top:366.5px"><i></i><i></i><i></i></div>
<div class="rdiv" style="top:402.5px"></div>
<svg class="abs drag" style="left:415px;top:429.1px" width="16" height="18" viewBox="0 0 16 18"><use href="#dragi"/></svg>
<div class="th" style="top:415.6px"><svg width="62" height="45.400" viewBox="0 0 62 45.400"><use href="#g1"/></svg>
<b><span>Copywriting</span><span>Practicing</span><span>Templates</span></b>
</div>
<div class="t nm" style="left:519px;top:438.1px;letter-spacing:0.235px;margin-left:0.6px">Copywriting Practicing Templates</div>
<div class="bx pk" style="left:829.5px;top:425.7px;width:43.5px"></div>
<div class="t bt" style="left:837px;top:438.4px;font-size:14.300px;letter-spacing:-0.5px;margin-left:0.21px">PDF</div>
<div class="t ac" style="left:987px;top:438.6px;letter-spacing:-0.412px;margin-left:0.28px">Free</div>
<div class="t ac" style="left:1146.500px;top:438.1px">-</div>
<div class="bx gr" style="left:1305.25px;top:425.7px;width:82.25px"></div>
<div class="t bt" style="left:1313px;top:438.4px;letter-spacing:0.047px;margin-left:0.19px">Published</div>
<div class="dots" style="left:1460px;top:437.1px"><i></i><i></i><i></i></div>
<div class="rdiv" style="top:473.1px"></div>
<svg class="abs drag" style="left:415px;top:499.7px" width="16" height="18" viewBox="0 0 16 18"><use href="#dragi"/></svg>
<div class="th" style="top:486.2px"><svg width="62" height="45.400" viewBox="0 0 62 45.400"><use href="#g1"/></svg>
<b><span>Ultimate</span><span>Proofreading</span><span>Guide</span></b>
</div>
<div class="t nm" style="left:519px;top:508.7px;letter-spacing:0.117px;margin-left:0.22px">Ultimate Proofreading Guide</div>
<div class="bx pk" style="left:829.5px;top:496.3px;width:43.5px"></div>
<div class="t bt" style="left:837px;top:509.0px;font-size:14.300px;letter-spacing:-0.5px;margin-left:0.21px">PDF</div>
<div class="t ac" style="left:987px;top:509.2px;letter-spacing:0.007px;margin-left:0.28px">By segments</div>
<div class="bx bl" style="left:1146.5px;top:496.3px;width:62.75px"></div>
<div class="t bt" style="left:1154px;top:509.0px;letter-spacing:-0.319px;margin-left:0.13px">Essays</div>
<div class="bx gr" style="left:1305.25px;top:496.3px;width:82.25px"></div>
<div class="t bt" style="left:1313px;top:509.0px;letter-spacing:0.047px;margin-left:0.19px">Published</div>
<div class="dots" style="left:1460px;top:507.7px"><i></i><i></i><i></i></div>
<div class="rdiv" style="top:543.7px"></div>
<svg class="abs drag" style="left:415px;top:570.3px" width="16" height="18" viewBox="0 0 16 18"><use href="#dragi"/></svg>
<div class="th" style="top:556.8px"><svg width="62" height="45.400" viewBox="0 0 62 45.400"><use href="#g1"/></svg>
<b><span>How to Recycle</span><span>Pitches</span></b>
</div>
<div class="t nm" style="left:519px;top:579.3px;letter-spacing:0.039px;margin-left:0.13px">How to Recycle Pitches</div>
<div class="bx pk" style="left:829.5px;top:566.9px;width:54.75px"></div>
<div class="t bt" style="left:837px;top:579.6px;letter-spacing:-0.122px;margin-left:1.27px">Audio</div>
<div class="t ac" style="left:987px;top:579.8px;letter-spacing:0.007px;margin-left:0.28px">By segments</div>
<div class="bx bl" style="left:1146.5px;top:566.9px;width:62px"></div>
<div class="t bt" style="left:1154px;top:579.6px;letter-spacing:-0.145px;margin-left:1.35px">Audios</div>
<div class="bx gr" style="left:1305.25px;top:566.9px;width:82.25px"></div>
<div class="t bt" style="left:1313px;top:579.6px;letter-spacing:0.047px;margin-left:0.19px">Published</div>
<div class="dots" style="left:1460px;top:578.3px"><i></i><i></i><i></i></div>
<div class="rdiv" style="top:614.3px"></div>
<svg class="abs drag" style="left:415px;top:640.9px" width="16" height="18" viewBox="0 0 16 18"><use href="#dragi"/></svg>
<div class="th" style="top:627.4px"><svg width="62" height="45.400" viewBox="0 0 62 45.400"><use href="#g1"/></svg>
<b><span>Unleashing</span><span>Your</span><span>Imagination</span></b>
</div>
<div class="t nm" style="left:519px;top:649.9px;letter-spacing:0.155px;margin-left:0.22px">Unleashing Your Imagination</div>
<div class="bx pk" style="left:829.5px;top:637.5px;width:54.75px"></div>
<div class="t bt" style="left:837px;top:650.2px;letter-spacing:-0.122px;margin-left:1.27px">Audio</div>
<div class="t ac" style="left:987px;top:650.4px;letter-spacing:0.007px;margin-left:0.28px">By segments</div>
<div class="bx bl" style="left:1146.5px;top:637.5px;width:62px"></div>
<div class="t bt" style="left:1154px;top:650.2px;letter-spacing:-0.145px;margin-left:1.35px">Audios</div>
<div class="bx gr" style="left:1305.25px;top:637.5px;width:82.25px"></div>
<div class="t bt" style="left:1313px;top:650.2px;letter-spacing:0.047px;margin-left:0.19px">Published</div>
<div class="dots" style="left:1460px;top:648.9px"><i></i><i></i><i></i></div>
<div class="rdiv" style="top:684.9px"></div>
<svg class="abs drag" style="left:415px;top:711.5px" width="16" height="18" viewBox="0 0 16 18"><use href="#dragi"/></svg>
<div class="th" style="top:698.0px"><svg width="62" height="45.400" viewBox="0 0 62 45.400"><use href="#g1"/></svg>
<b><span>Creating the</span><span>Writers</span><span>Room</span></b>
</div>
<div class="t nm" style="left:519px;top:720.5px;letter-spacing:0.05px;margin-left:0.6px">Creating the Writers Room</div>
<div class="bx pk" style="left:829.5px;top:708.1px;width:54.75px"></div>
<div class="t bt" style="left:837px;top:720.8px;letter-spacing:-0.122px;margin-left:1.27px">Audio</div>
<div class="t ac" style="left:987px;top:721.0px;letter-spacing:0.007px;margin-left:0.28px">By segments</div>
<div class="bx bl" style="left:1146.5px;top:708.1px;width:62px"></div>
<div class="t bt" style="left:1154px;top:720.8px;letter-spacing:-0.145px;margin-left:1.35px">Audios</div>
<div class="bx gr" style="left:1305.25px;top:708.1px;width:82.25px"></div>
<div class="t bt" style="left:1313px;top:720.8px;letter-spacing:0.047px;margin-left:0.19px">Published</div>
<div class="dots" style="left:1460px;top:719.5px"><i></i><i></i><i></i></div>
<div class="rdiv" style="top:755.5px"></div>
<svg class="abs drag" style="left:415px;top:782.1px" width="16" height="18" viewBox="0 0 16 18"><use href="#dragi"/></svg>
<div class="th" style="top:768.6px"><svg width="62" height="45.400" viewBox="0 0 62 45.400"><use href="#p1"/></svg>
</div>
<div class="t nm" style="left:519px;top:791.1px;letter-spacing:0.268px;margin-left:0.6px">Critical Thinking</div>
<div class="bx pk" style="left:829.5px;top:778.7px;width:43.5px"></div>
<div class="t bt" style="left:837px;top:791.4px;font-size:14.300px;letter-spacing:-0.5px;margin-left:0.21px">PDF</div>
<div class="t ac" style="left:987px;top:791.6px;letter-spacing:0.007px;margin-left:0.28px">By segments</div>
<div class="bx bl" style="left:1146.5px;top:778.7px;width:62.75px"></div>
<div class="t bt" style="left:1154px;top:791.4px;letter-spacing:-0.319px;margin-left:0.13px">Essays</div>
<div class="bx gr" style="left:1305.25px;top:778.7px;width:82.25px"></div>
<div class="t bt" style="left:1313px;top:791.4px;letter-spacing:0.047px;margin-left:0.19px">Published</div>
<div class="dots" style="left:1460px;top:790.1px"><i></i><i></i><i></i></div>
<div class="rdiv" style="top:826.1px"></div>
<svg class="abs drag" style="left:415px;top:852.7px" width="16" height="18" viewBox="0 0 16 18"><use href="#dragi"/></svg>
<div class="th" style="top:839.2px"><svg width="62" height="45.400" viewBox="0 0 62 45.400"><use href="#p2"/></svg>
</div>
<div class="t nm" style="left:519px;top:861.7px;letter-spacing:0.34px;margin-left:0.13px">Productivity</div>
<div class="bx pk" style="left:829.5px;top:849.3px;width:43.5px"></div>
<div class="t bt" style="left:837px;top:862.0px;font-size:14.300px;letter-spacing:-0.5px;margin-left:0.21px">PDF</div>
<div class="t ac" style="left:987px;top:862.2px;letter-spacing:0.141px;margin-left:0.65px">One-time fee</div>
<div class="bx bl" style="left:1146.5px;top:849.3px;width:62.75px"></div>
<div class="t bt" style="left:1154px;top:862.0px;letter-spacing:-0.319px;margin-left:0.13px">Essays</div>
<div class="bx or" style="left:1305.25px;top:849.3px;width:49.25px"></div>
<div class="t bt" style="left:1313px;top:862.0px;letter-spacing:0.08px;margin-left:0.2px">Draft</div>
<div class="dots" style="left:1460px;top:860.7px"><i></i><i></i><i></i></div>
<div class="rdiv" style="top:896.7px"></div>
<svg class="abs drag" style="left:415px;top:923.3px" width="16" height="18" viewBox="0 0 16 18"><use href="#dragi"/></svg>
<div class="th" style="top:909.8px"><svg width="62" height="45.400" viewBox="0 0 62 45.400"><use href="#p3"/></svg>
</div>
<div class="t nm" style="left:519px;top:932.3px;letter-spacing:0.101px;margin-left:-0.09px">Idea Organization</div>
<div class="bx pk" style="left:829.5px;top:919.9px;width:43.5px"></div>
<div class="t bt" style="left:837px;top:932.6px;font-size:14.300px;letter-spacing:-0.5px;margin-left:0.21px">PDF</div>
<div class="t ac" style="left:987px;top:932.8px;letter-spacing:0.007px;margin-left:0.28px">By segments</div>
<div class="bx bl" style="left:1146.5px;top:919.9px;width:62.75px"></div>
<div class="t bt" style="left:1154px;top:932.6px;letter-spacing:-0.319px;margin-left:0.13px">Essays</div>
<div class="bx or" style="left:1305.25px;top:919.9px;width:49.25px"></div>
<div class="t bt" style="left:1313px;top:932.6px;letter-spacing:0.08px;margin-left:0.2px">Draft</div>
<div class="dots" style="left:1460px;top:931.3px"><i></i><i></i><i></i></div>
<div class="rdiv" style="top:967.3px"></div>
<svg class="abs drag" style="left:415px;top:993.9px" width="16" height="18" viewBox="0 0 16 18"><use href="#dragi"/></svg>
<div class="th" style="top:980.4px"><svg width="62" height="45.400" viewBox="0 0 62 45.400"><use href="#p4"/></svg>
</div>
<div class="t nm" style="left:519px;top:1002.9px;letter-spacing:-0.1px;margin-left:0.98px">The Process Can Feel Messy</div>
<div class="bx pk" style="left:829.5px;top:990.5px;width:54.75px"></div>
<div class="t bt" style="left:837px;top:1003.2px;letter-spacing:-0.122px;margin-left:1.27px">Audio</div>
<div class="t ac" style="left:987px;top:1003.4px;letter-spacing:0.007px;margin-left:0.28px">By segments</div>
<div class="bx bl" style="left:1146.5px;top:990.5px;width:62px"></div>
<div class="t bt" style="left:1154px;top:1003.2px;letter-spacing:-0.145px;margin-left:1.35px">Audios</div>
<div class="bx or" style="left:1305.25px;top:990.5px;width:49.25px"></div>
<div class="t bt" style="left:1313px;top:1003.2px;letter-spacing:0.08px;margin-left:0.2px">Draft</div>
<div class="dots" style="left:1460px;top:1001.9px"><i></i><i></i><i></i></div>
<div class="rdiv" style="top:1037.9px"></div>
<svg class="abs drag" style="left:415px;top:1064.5px" width="16" height="18" viewBox="0 0 16 18"><use href="#dragi"/></svg>
<div class="th" style="top:1051.0px"><svg width="62" height="45.400" viewBox="0 0 62 45.400"><use href="#p5"/></svg>
</div>
<div class="t nm" style="left:519px;top:1073.5px;letter-spacing:0.077px;margin-left:0.13px">Dealing With Rejection</div>
<div class="bx pk" style="left:829.5px;top:1061.1px;width:54.75px"></div>
<div class="t bt" style="left:837px;top:1073.8px;letter-spacing:-0.122px;margin-left:1.27px">Audio</div>
<div class="t ac" style="left:987px;top:1074.0px;letter-spacing:0.007px;margin-left:0.28px">By segments</div>
<div class="bx bl" style="left:1146.5px;top:1061.1px;width:62px"></div>
<div class="t bt" style="left:1154px;top:1073.8px;letter-spacing:-0.145px;margin-left:1.35px">Audios</div>
<div class="bx or" style="left:1305.25px;top:1061.1px;width:49.25px"></div>
<div class="t bt" style="left:1313px;top:1073.8px;letter-spacing:0.08px;margin-left:0.2px">Draft</div>
<div class="dots" style="left:1460px;top:1072.5px"><i></i><i></i><i></i></div>

<!-- chat bubble -->
<div class="abs" style="left:1531.300px;top:1026.200px;width:48px;height:48px;border-radius:50%;background:#2547e6"></div>
<svg class="abs" style="left:1542px;top:1038.800px" width="28" height="26" viewBox="0 0 28 26"><path d="M4.500 1.500h18a3 3 0 0 1 3 3v10.500a3 3 0 0 1-3 3h-4.500l-7.500 5.500v-5.500h-6a3 3 0 0 1-3-3V4.500a3 3 0 0 1 3-3Z" fill="#fff"/></svg>

</body>
</html>
